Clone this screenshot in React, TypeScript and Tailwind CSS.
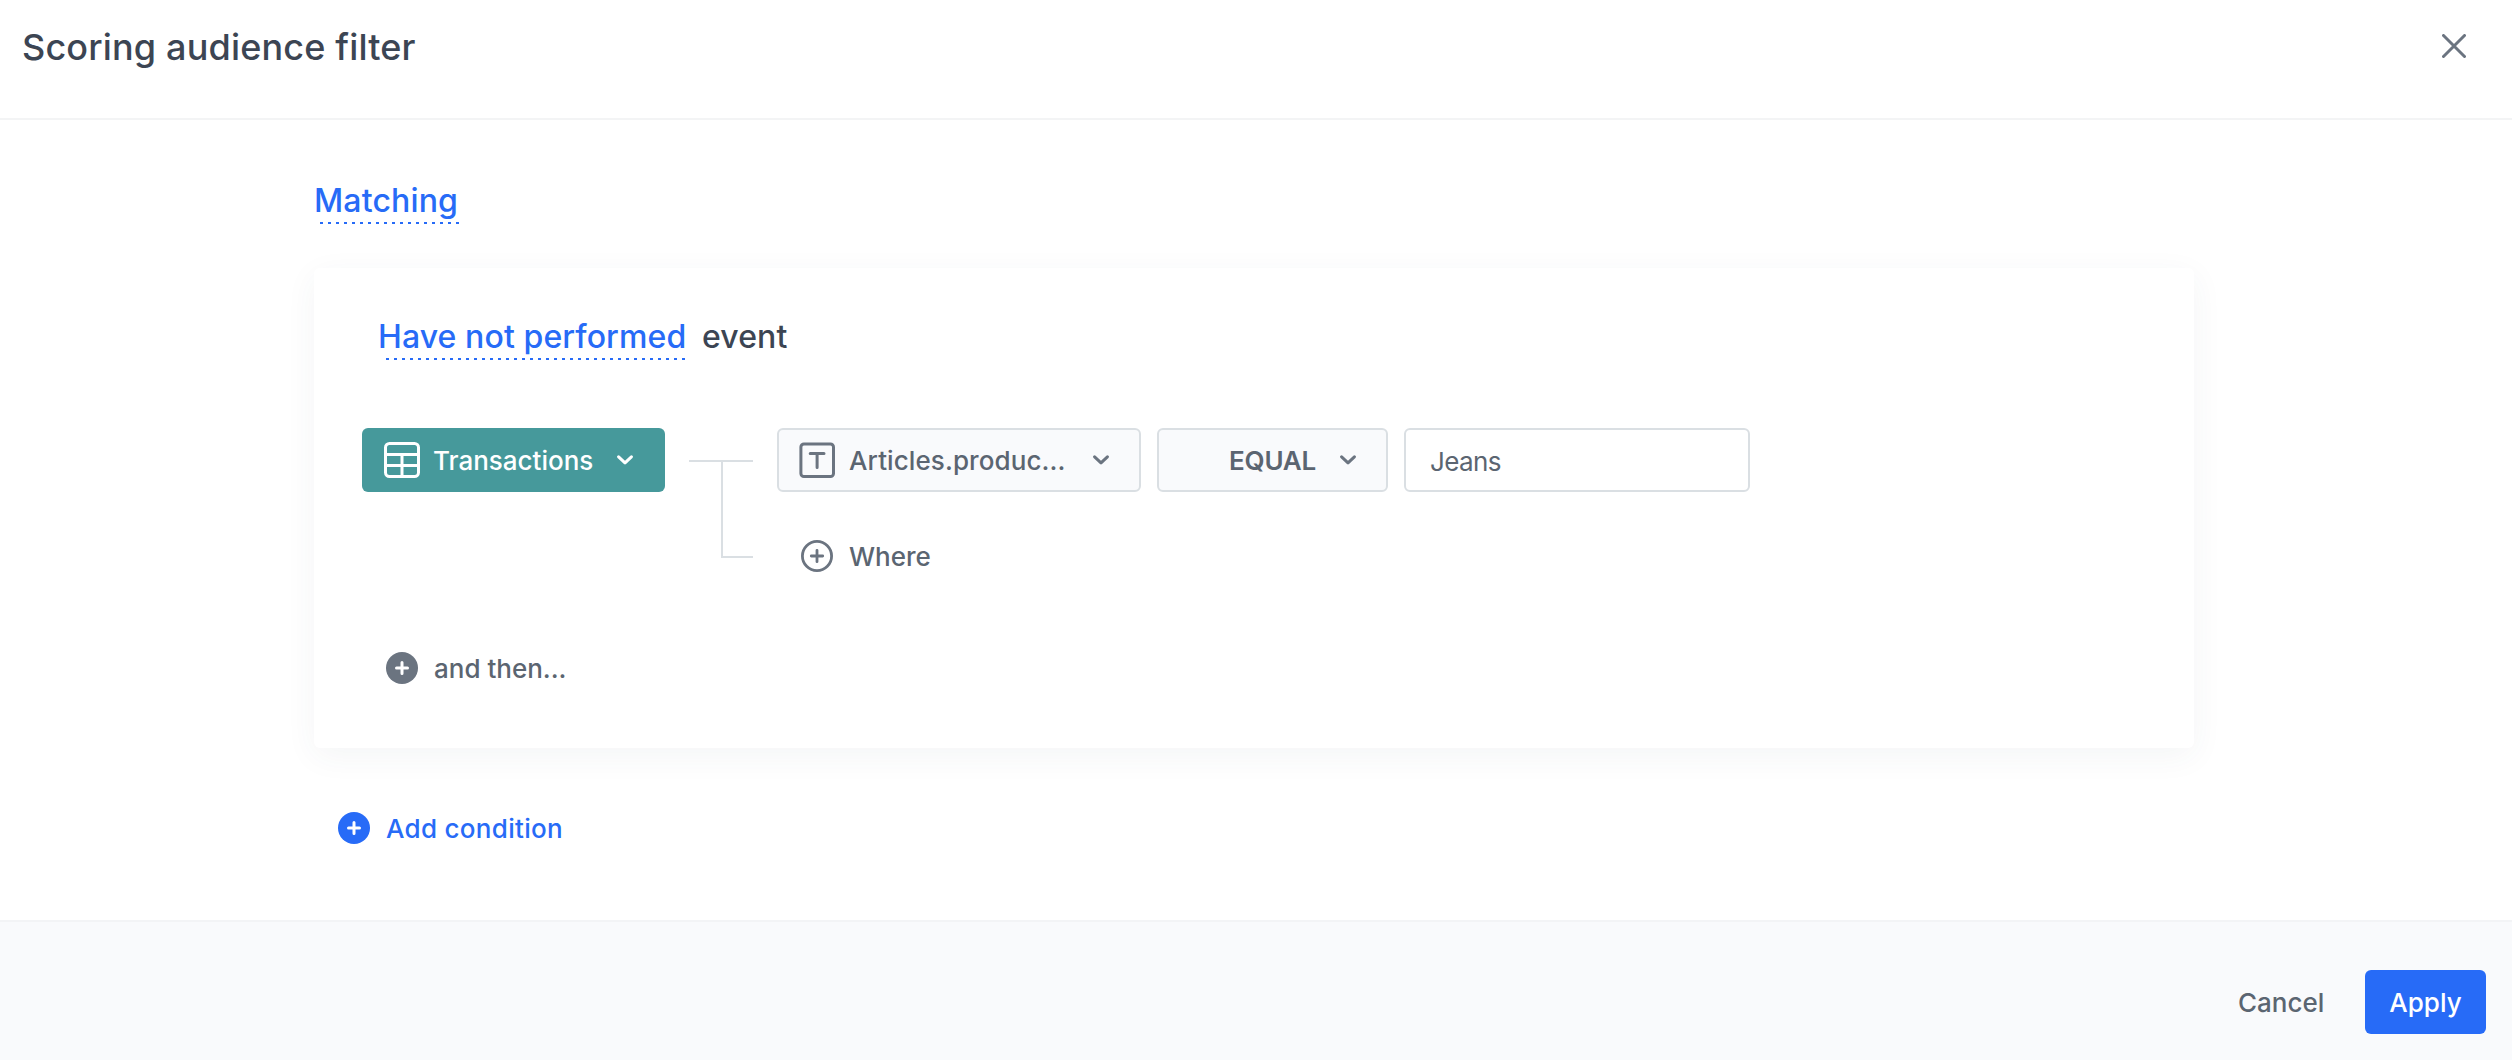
import React, { useState } from 'react';

interface IconProps {
  className?: string;
}

function CloseIcon({ className }: IconProps) {
  return (
    <svg viewBox="0 0 24 24" className={className} fill="none" stroke="currentColor" strokeWidth="3" strokeLinecap="round">
      <path d="M1.5 1.5 22.5 22.5M22.5 1.5 1.5 22.5" />
    </svg>
  );
}

function ChevronIcon({ className }: IconProps) {
  return (
    <svg viewBox="0 0 16 10" className={className} fill="none" stroke="currentColor" strokeWidth="3" strokeLinecap="round" strokeLinejoin="round">
      <path d="M1.6 1.8 8 7.9 14.4 1.8" />
    </svg>
  );
}

function TableIcon({ className }: IconProps) {
  return (
    <svg viewBox="0 0 36 36" className={className} fill="none" stroke="currentColor" strokeWidth="3">
      <rect x="1.5" y="1.5" width="33" height="33" rx="4" />
      <path d="M1.5 12.5H34.5M1.5 23.5H34.5M18 12.5V34.5" />
    </svg>
  );
}

function TextTypeIcon({ className }: IconProps) {
  return (
    <svg viewBox="0 0 36 36" className={className} fill="none" stroke="currentColor" strokeWidth="3" strokeLinecap="round">
      <rect x="1.9" y="1.9" width="32.6" height="32.6" rx="3" />
      <path d="M11.2 11.5H25M18.1 11.5V25.4" />
    </svg>
  );
}

function PlusOutlineIcon({ className }: IconProps) {
  return (
    <svg viewBox="0 0 32 32" className={className} fill="none" stroke="currentColor" strokeWidth="2.8" strokeLinecap="round">
      <circle cx="16" cy="16" r="14.6" />
      <path d="M10.3 16H21.7M16 10.3V21.7" />
    </svg>
  );
}

function PlusSolidIcon({ className }: IconProps) {
  return (
    <svg viewBox="0 0 32 32" className={className} fill="none" strokeWidth="3" strokeLinecap="round">
      <circle cx="16" cy="16" r="16" fill="currentColor" />
      <path d="M10.5 16H21.5M16 10.5V21.5" stroke="#fff" />
    </svg>
  );
}

export default function App() {
  const [value, setValue] = useState('Jeans');

  return (
    <div className="flex flex-col w-full h-[1060px] bg-white font-['Inter',sans-serif] font-medium text-[26px] text-[#5b6571]">
      {/* Header */}
      <header className="flex justify-between items-start h-[120px] pt-[25px] pl-[22px] pr-[46px] border-b-2 border-[#f3f4f5]">
        <h1 className="text-[36px] leading-[44px] font-medium tracking-[0.16px] text-[#3c4553]">Scoring audience filter</h1>
        <button type="button" className="mt-[9px] text-[#6b7480]">
          <CloseIcon className="w-6 h-6" />
        </button>
      </header>

      {/* Conditions */}
      <main className="flex flex-col items-start h-[800px] pt-[61px] pl-[314px]">
        <button type="button" className="flex flex-col w-[145px] text-[32px] leading-10 text-left tracking-[0.15px] text-[#276bf7]">
          <span className="whitespace-nowrap">Matching</span>
          <span className="self-end w-[139px] h-0.5 mt-px bg-[linear-gradient(90deg,#276bf7_3px,transparent_3px)] bg-[length:8px_2px]" />
        </button>

        <section className="w-[1880px] h-[480px] mt-11 pt-[49px] pl-12 bg-white rounded-md shadow-[0_8px_32px_rgba(60,80,90,0.055)]">
          <div className="flex pl-4 text-[32px] leading-10 tracking-[0.1px]">
            <button type="button" className="flex flex-col w-[307px] text-left text-[#276bf7]">
              <span className="whitespace-nowrap">Have not performed</span>
              <span className="self-end w-[299px] h-0.5 mt-px bg-[linear-gradient(90deg,#276bf7_3px,transparent_3px)] bg-[length:8px_2px]" />
            </button>
            <span className="ml-[17px] text-[#3c4553]">event</span>
          </div>

          <div className="flex mt-[68px]">
            <button type="button" className="flex items-center w-[303px] h-16 pl-[22px] pr-8 rounded-md bg-[#46999b] text-white">
              <TableIcon className="w-9 h-9" />
              <span className="ml-[13px] pt-px">Transactions</span>
              <ChevronIcon className="w-4 h-2.5 ml-auto" />
            </button>

            {/* Branch lines between the event and its filters */}
            <div className="w-16 h-[130px] mx-6 pt-8">
              <div className="h-0.5 bg-[#dadfe3]" />
              <div className="w-8 h-24 ml-8 border-l-2 border-b-2 border-[#dadfe3]" />
            </div>

            <div className="flex flex-col gap-8">
              <div className="flex gap-4">
                <button type="button" className="flex items-center w-[364px] h-16 pl-5 pr-[30px] rounded-md border-2 border-[#dadfe3] bg-[#f9fafc]">
                  <TextTypeIcon className="w-9 h-9 text-[#6b7480]" />
                  <span className="ml-3.5 pt-px tracking-[0.1px]">Articles.produc...</span>
                  <ChevronIcon className="w-4 h-2.5 ml-auto text-[#6b7480]" />
                </button>
                <button type="button" className="flex items-center w-[231px] h-16 pl-[70px] pr-[30px] rounded-md border-2 border-[#dadfe3] bg-[#f9fafc] font-semibold">
                  <span className="pt-px tracking-[-0.2px]">EQUAL</span>
                  <ChevronIcon className="w-4 h-2.5 ml-auto text-[#6b7480]" />
                </button>
                <input
                  type="text"
                  value={value}
                  onChange={(e) => setValue(e.target.value)}
                  className="w-[346px] h-16 pl-6 pt-[3px] rounded-md border-2 border-[#dadfe3] bg-white font-normal tracking-[-0.6px] outline-none"
                />
              </div>
              <button type="button" className="flex items-center h-16 pl-6">
                <PlusOutlineIcon className="w-8 h-8 text-[#6b7480]" />
                <span className="ml-4 pt-px">Where</span>
              </button>
            </div>
          </div>

          <button type="button" className="flex items-center h-16 mt-12 pl-6">
            <PlusSolidIcon className="w-8 h-8 text-[#6b7480]" />
            <span className="ml-4 pt-px">and then...</span>
          </button>
        </section>

        <button type="button" className="flex items-center h-16 mt-12 pl-6 text-[#276bf7]">
          <PlusSolidIcon className="w-8 h-8" />
          <span className="ml-4 pt-px tracking-[0.3px]">Add condition</span>
        </button>
      </main>

      {/* Footer */}
      <footer className="flex justify-end h-[140px] pt-12 pr-[26px] border-t-2 border-[#f3f4f6] bg-[#f9fafc]">
        <button type="button" className="h-16 w-[128px] pl-px text-left">Cancel</button>
        <button type="button" className="h-16 w-[121px] rounded-md bg-[#276bf7] text-white">Apply</button>
      </footer>
    </div>
  );
}
